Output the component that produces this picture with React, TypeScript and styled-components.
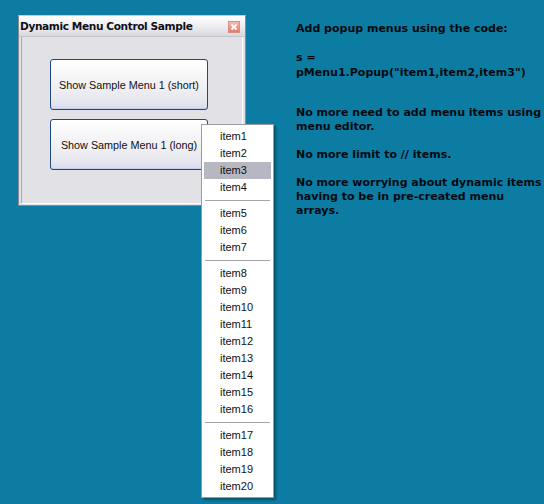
import React from "react";
import styled, { createGlobalStyle } from "styled-components";

const Global = createGlobalStyle`
  html, body { margin: 0; padding: 0; }
  body {
    background: #0c7ca2;
    width: 544px;
    height: 504px;
    overflow: hidden;
    font-family: "Liberation Sans", Arial, sans-serif;
  }
`;

const Desktop = styled.div`
  position: relative;
  display: flex;
  align-items: flex-start;
  width: 544px;
  height: 504px;
`;

const Window = styled.div`
  margin: 15px 0 0 18px;
  width: 228px;
  height: 191px;
  box-sizing: border-box;
  border: 1px solid #8a8a92;
  border-top-color: #c9c9d2;
  background: #e2e1e6;
  display: flex;
  flex-direction: column;
`;

const TitleBar = styled.div`
  height: 20px;
  display: flex;
  align-items: center;
  justify-content: space-between;
  padding: 0 5px 0 1px;
  background: linear-gradient(to bottom, #ffffff 0%, #efeff3 45%, #d8d8de 100%);
  border-bottom: 1px solid #c4c4cc;
`;

const Title = styled.span`
  font-family: "DejaVu Sans", Verdana, sans-serif;
  font-weight: bold;
  font-size: 10.6px;
  letter-spacing: -0.4px;
  color: #101018;
`;

const CloseBox = styled.div`
  width: 12px;
  height: 12px;
  box-sizing: border-box;
  border: 1px solid #e08a86;
  background: linear-gradient(to bottom, #f8bcb0, #e8786a);
  display: flex;
  align-items: center;
  justify-content: center;
  margin-top: 1px;
`;

const Client = styled.div`
  flex: 1;
  margin: 0 2px 1px 2px;
  border-left: 1px solid #a8a8b0;
  border-bottom: 1px solid #ffffff;
  border-right: 1px solid #ffffff;
  display: flex;
  flex-direction: column;
  gap: 9px;
  padding: 22px 0 0 28px;
`;

const Button = styled.div`
  width: 158px;
  height: 51px;
  box-sizing: border-box;
  border: 1px solid #1c4a86;
  border-radius: 3px;
  background: linear-gradient(to bottom, #ffffff 0%, #f4f4f7 40%, #e6e6ee 85%, #d8dcee 100%);
  box-shadow: inset 0 -1px 0 #c6cde8;
  display: flex;
  align-items: center;
  justify-content: center;
  font-family: "Liberation Sans", Arial, sans-serif;
  font-size: 10.8px;
  color: #101010;
`;

const Notes = styled.div`
  margin: 22px 0 0 50px;
  font-family: "DejaVu Sans", Verdana, sans-serif;
  font-weight: bold;
  font-size: 11px;
  line-height: 14px;
  color: #000a10;
  white-space: nowrap;
`;

const Para = styled.p<{ $gap?: number; $lh?: number }>`
  margin: 0 0 ${(p) => p.$gap ?? 14}px 0;
  line-height: ${(p) => p.$lh ?? 14}px;
`;

const Menu = styled.div`
  position: absolute;
  left: 201px;
  top: 124px;
  width: 73px;
  box-sizing: border-box;
  background: #ffffff;
  border: 1px solid #9a9aa2;
  padding: 3px 2px 2px 2px;
  box-shadow: 2px 2px 2px rgba(0, 0, 0, 0.35);
`;

const Item = styled.div<{ $active?: boolean }>`
  height: 17px;
  line-height: 17px;
  padding-left: 16px;
  font-family: "Liberation Sans", Arial, sans-serif;
  font-size: 11px;
  color: #111;
  background: ${(p) => (p.$active ? "#b7b6c3" : "transparent")};
`;

const Separator = styled.div`
  height: 1px;
  background: #a4a4a8;
  margin: 4px 1px 4px 1px;
`;

const groups = [
  [1, 2, 3, 4],
  [5, 6, 7],
  [8, 9, 10, 11, 12, 13, 14, 15, 16],
  [17, 18, 19, 20],
];

export default function App() {
  return (
    <>
      <Global />
      <Desktop>
        <Window>
          <TitleBar>
            <Title>Dynamic Menu Control Sample</Title>
            <CloseBox>
              <svg width="8" height="8" viewBox="0 0 8 8">
                <path d="M1.5 1.5 L6.5 6.5 M6.5 1.5 L1.5 6.5" stroke="#fff" strokeWidth="1.8" />
              </svg>
            </CloseBox>
          </TitleBar>
          <Client>
            <Button>Show Sample Menu 1 (short)</Button>
            <Button>Show Sample Menu 1 (long)</Button>
          </Client>
        </Window>
        <Notes>
          <Para $gap={14}>Add popup menus using the code:</Para>
          <Para $gap={26} $lh={15}>
            s =<br />
            pMenu1.Popup("item1,item2,item3")
          </Para>
          <Para>
            No more need to add menu items using
            <br />
            menu editor.
          </Para>
          <Para>No more limit to // items.</Para>
          <Para>
            No more worrying about dynamic items
            <br />
            having to be in pre-created menu
            <br />
            arrays.
          </Para>
        </Notes>
        <Menu>
          {groups.map((g, gi) => (
            <React.Fragment key={gi}>
              {gi > 0 && <Separator />}
              {g.map((n) => (
                <Item key={n} $active={n === 3}>
                  item{n}
                </Item>
              ))}
            </React.Fragment>
          ))}
        </Menu>
      </Desktop>
    </>
  );
}
